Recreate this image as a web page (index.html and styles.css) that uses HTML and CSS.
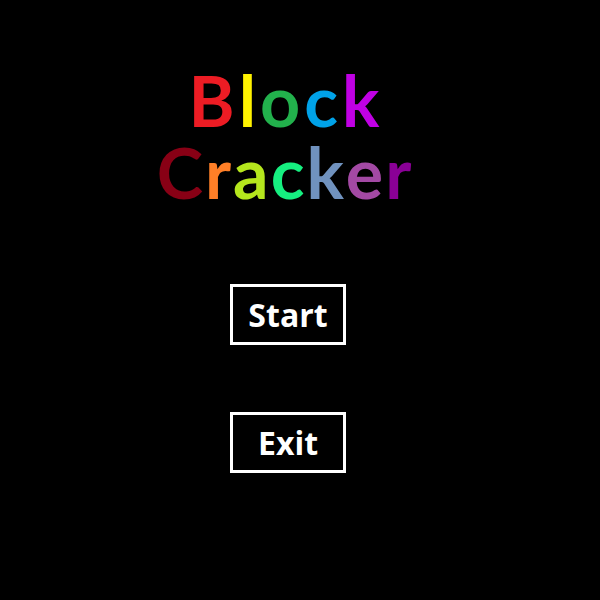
FILE: index.html
```html
<!DOCTYPE html>
<html>
<head>
<meta charset="utf-8">
<link rel="stylesheet" href="styles.css">
</head>
<body>
<main class="screen">
  <h1 class="title">
    <span class="line line-wide"><span class="c1">B</span><span class="c2">l</span><span class="c3">o</span><span class="c4">c</span><span class="c5">k</span></span>
    <span class="line"><span class="c6">C</span><span class="c7">r</span><span class="c8">a</span><span class="c9">c</span><span class="c10">k</span><span class="c11">e</span><span class="c12">r</span></span>
  </h1>
  <div class="menu">
    <div class="btn">Start</div>
    <div class="btn">Exit</div>
  </div>
</main>
</body>
</html>
```
FILE: styles.css
```css
html, body {
  margin: 0;
  padding: 0;
  background: #000;
}
.screen {
  width: 568px;
  height: 600px;
  display: flex;
  flex-direction: column;
  align-items: center;
  font-family: "Open Sans", "Lato", sans-serif;
  font-weight: 700;
}
.title {
  margin: 64px 0 0 0;
  font-family: "Lato", "Open Sans", sans-serif;
  font-size: 70px;
  line-height: 72px;
  font-weight: 700;
  display: flex;
  flex-direction: column;
  align-items: center;
}
.line {
  display: flex;
  height: 72px;
  gap: 2px;
  white-space: nowrap;
}
.line-wide {
  gap: 4px;
}
.line > span {
  display: block;
}
.c1 { color: #ed1c24; }
.c2 { color: #fff200; }
.c3 { color: #22b14c; }
.c4 { color: #00a2e8; }
.c5 { color: #c000e4; }
.c6 { color: #880015; }
.c7 { color: #ff7f27; }
.c8 { color: #b5e61d; }
.c9 { color: #16ef80; }
.c10 { color: #7092be; }
.c11 { color: #a349a4; }
.c12 { color: #8a0096; }
.menu {
  margin-top: 76px;
  margin-left: 8px;
  display: flex;
  flex-direction: column;
  align-items: center;
  gap: 67px;
}
.btn {
  box-sizing: border-box;
  width: 116px;
  height: 61px;
  border: 3px solid #fff;
  color: #fff;
  font-size: 32px;
  line-height: 55px;
  text-align: center;
}
```
